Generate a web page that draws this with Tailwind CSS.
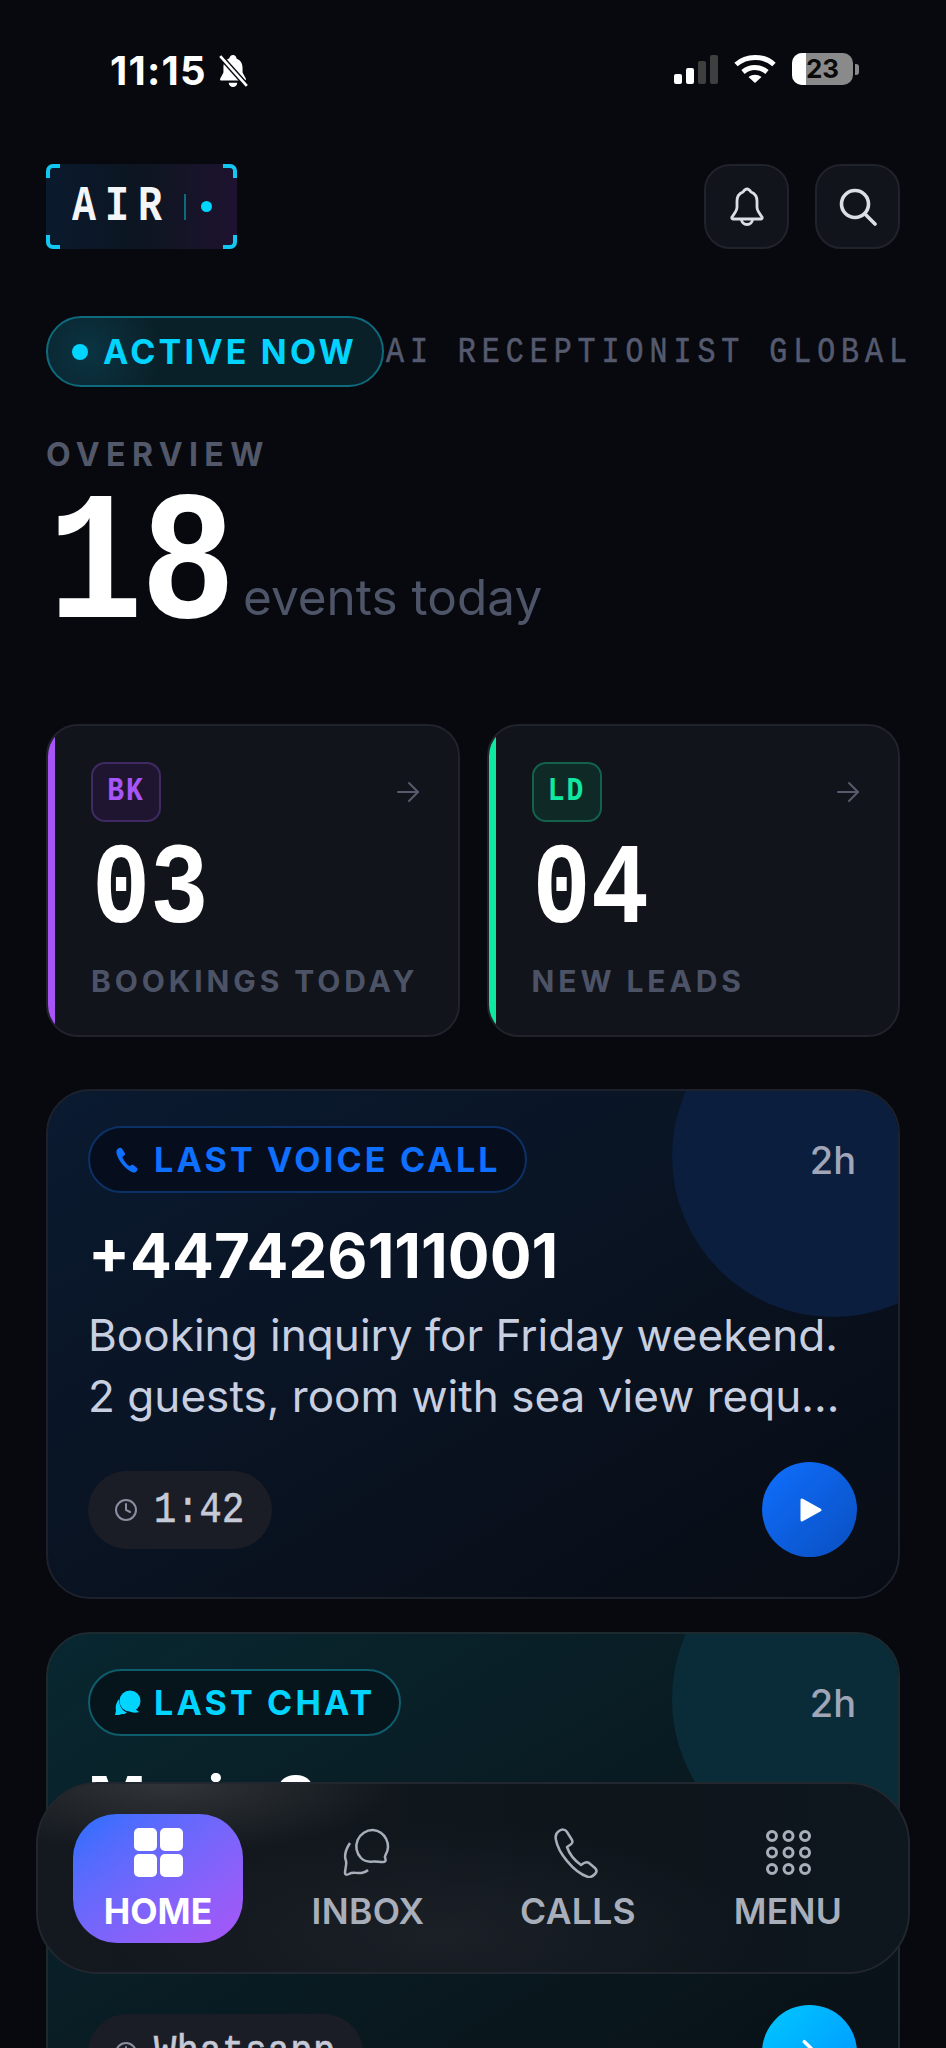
<!DOCTYPE html>
<html lang="en">
<head>
    <meta charset="UTF-8">
    <meta name="viewport" content="width=device-width, initial-scale=1.0">
    <title>AIR Overview</title>
    <script src="https://cdn.jsdelivr.net/npm/@tailwindcss/browser@4"></script>
</head>
<body class="bg-[#07090e]">
    <div class="relative h-[2048px] overflow-hidden bg-[#07090e] font-['Inter',sans-serif] text-white">
        <div class="px-[46px]">

            <!-- status bar -->
            <div class="flex h-[164px] items-start justify-between pt-[49px] pl-[64px] pr-[41px]">
                <div class="flex items-center gap-[9px]">
                    <span class="text-[40px] leading-[44px] font-bold tracking-[1.200px]">11:15</span>
                    <svg class="h-[34px] w-[34px]" viewBox="0 0 32 32" fill="white">
                        <path d="M16 1c2 0 3 1.500 3.500 3.500 4 1.500 5.500 5 5.500 9v4l3 5.500c.5 1 0 2-1 2H5c-1 0-1.500-1-1-2l3-5.500v-5c0-4 2-7 5.500-8.500C13 2.500 14 1 16 1z"/>
                        <path d="M12 27h8a4 4 0 0 1-8 0z"/>
                        <path d="M4 2 29 30" stroke="#07090e" stroke-width="5"/>
                        <path d="M4 2 29 30" stroke="white" stroke-width="2.500"/>
                    </svg>
                </div>
                <div class="flex items-center pt-[4px]">
                    <div class="flex h-[30px] items-end gap-[4px]">
                        <span class="h-[10px] w-[8px] rounded-[2px] bg-white"></span>
                        <span class="h-[16px] w-[8px] rounded-[2px] bg-white"></span>
                        <span class="h-[23px] w-[8px] rounded-[2px] bg-[#3f3f3f]"></span>
                        <span class="h-[29px] w-[8px] rounded-[2px] bg-[#3f3f3f]"></span>
                    </div>
                    <svg class="ml-[16px] h-[30px] w-[42px]" viewBox="0 0 42 30" fill="none" stroke="white" stroke-width="5">
                        <path d="M2 10.500C12.500 1 29.500 1 40 10.500"/>
                        <path d="M9 18c7-6 17-6 24 0"/>
                        <path d="M21 29 14.500 23c4-3 9-3 13 0z" fill="white" stroke="none"/>
                    </svg>
                    <div class="relative ml-[16px] flex h-[32px] w-[61px] overflow-hidden rounded-[10px] bg-[#8a8a8a]">
                        <span class="w-[14px] bg-white"></span>
                        <span class="absolute inset-0 text-center text-[26px] leading-[32px] font-bold text-[#0a0a0a]">23</span>
                    </div>
                    <span class="ml-[2px] h-[11px] w-[4px] rounded-r-[3px] bg-[#8a8a8a]"></span>
                </div>
            </div>

            <!-- header -->
            <div class="flex h-[85px] items-center justify-between">
                <div class="relative flex h-[85px] w-[191px] items-center rounded-[6px] bg-gradient-to-r from-[#0a1a2e] via-[#0c1520] to-[#1e1230]">
                    <span class="absolute top-0 left-0 h-[14px] w-[14px] rounded-tl-[7px] border-t-[4px] border-l-[4px] border-[#12c8f0]"></span>
                    <span class="absolute top-0 right-0 h-[14px] w-[14px] rounded-tr-[7px] border-t-[4px] border-r-[4px] border-[#12c8f0]"></span>
                    <span class="absolute bottom-0 left-0 h-[14px] w-[14px] rounded-bl-[7px] border-b-[4px] border-l-[4px] border-[#12c8f0]"></span>
                    <span class="absolute right-0 bottom-0 h-[14px] w-[14px] rounded-br-[7px] border-r-[4px] border-b-[4px] border-[#12c8f0]"></span>
                    <span class="ml-[26px] w-[112px] scale-y-[1.25] font-['Liberation_Mono',monospace] text-[40px] leading-[40px] font-bold tracking-[9px] text-[#f4f5f7]">AIR</span>
                    <span class="h-[26px] w-[2px] bg-[#0e6b7d]"></span>
                    <span class="ml-[15px] h-[11px] w-[11px] rounded-full bg-[#00d4ff]"></span>
                </div>
                <div class="flex gap-[26px]">
                    <div class="flex h-[85px] w-[85px] items-center justify-center rounded-[26px] border-2 border-[#20222c] bg-[#12141b]">
                        <svg class="h-[40px] w-[34px]" viewBox="0 0 34 40" fill="none" stroke="#dcdee6" stroke-width="2.800" stroke-linejoin="round">
                            <path d="M17 2c2 0 3 1.500 4 3 4 1.500 6 5 6 9v6c0 4 3 7 5 10 .5 1 0 2-1.500 2h-27c-1.500 0-2-1-1.500-2 2-3 5-6 5-10v-6c0-4 2-7.500 6-9 1-1.500 2-3 4-3z"/>
                            <path d="M11.500 32a5.500 5.500 0 0 0 11 0"/>
                        </svg>
                    </div>
                    <div class="flex h-[85px] w-[85px] items-center justify-center rounded-[26px] border-2 border-[#20222c] bg-[#12141b]">
                        <svg class="h-[38px] w-[38px]" viewBox="0 0 38 38" fill="none" stroke="#dcdee6" stroke-width="3.600" stroke-linecap="round">
                            <circle cx="16" cy="16" r="13.500"/>
                            <path d="M26 26 36 36"/>
                        </svg>
                    </div>
                </div>
            </div>

            <!-- active + ticker -->
            <div class="mt-[67px] flex h-[71px] items-center">
                <div class="flex h-[71px] w-[338px] shrink-0 items-center rounded-full border-2 border-[#0e6b7d] bg-[radial-gradient(circle_at_12%_50%,#0a3442,#0a2029_24%)]">
                    <span class="ml-[24px] h-[16px] w-[16px] rounded-full bg-[#00d4ff]"></span>
                    <span class="ml-[15px] text-[34px] leading-[40px] font-bold tracking-[3.200px] whitespace-nowrap text-[#00d4ff]">ACTIVE NOW</span>
                </div>
                <span class="ml-[2px] origin-center scale-y-[1.25] font-['Liberation_Mono',monospace] text-[30px] leading-[36px] tracking-[5.950px] whitespace-nowrap text-[#555a6e] [-webkit-text-stroke:0.5px_#555a6e]">AI RECEPTIONIST GLOBAL</span>
            </div>

            <!-- overview -->
            <div class="mt-[52px] h-[32px] text-[32px] leading-[32px] font-bold tracking-[6.400px] text-[#525869]">OVERVIEW</div>
            <div class="flex h-[155px] items-end">
                <span class="ml-[2px] w-[195px] origin-bottom scale-y-[1.168] font-['Liberation_Mono',monospace] text-[158px] leading-[100px] font-bold tracking-[-2px]">18</span>
                <span class="text-[49.500px] leading-[58px] text-[#4f5568]">events today</span>
            </div>

            <!-- stat cards -->
            <div class="mt-[98px] grid grid-cols-2 gap-[27px]">
                <div class="flex h-[313px] overflow-hidden rounded-[32px] border-2 border-[#20222c] bg-[#12141b]">
                    <div class="w-[7px] bg-[#a855f7]"></div>
                    <div class="flex-1 pt-[36px] pr-[38px] pl-[36px]">
                        <div class="flex items-center justify-between">
                            <div class="flex h-[60px] w-[70px] items-center justify-center rounded-[14px] border-2 border-[#3f2a63] bg-[#1f1530] font-['Liberation_Mono',monospace] text-[28px] font-bold tracking-[2px] text-[#a855f7]"><span class="scale-y-[1.2]">BK</span></div>
                            <svg class="h-[24px] w-[24px]" viewBox="0 0 24 24" fill="none" stroke="#565b6d" stroke-width="2" stroke-linecap="round" stroke-linejoin="round"><path d="M2 12h20"/><path d="m13 3 9 9-9 9"/></svg>
                        </div>
                        <div class="mt-[24px] ml-[1px] h-[90px] scale-y-[1.18] font-['Liberation_Mono',monospace] text-[97px] leading-[90px] font-bold">03</div>
                        <div class="mt-[29px] text-[30px] leading-[32px] font-bold tracking-[3.900px] whitespace-nowrap text-[#4d5366]">BOOKINGS TODAY</div>
                    </div>
                </div>
                <div class="flex h-[313px] overflow-hidden rounded-[32px] border-2 border-[#20222c] bg-[#12141b]">
                    <div class="w-[7px] bg-[#10e8a0]"></div>
                    <div class="flex-1 pt-[36px] pr-[38px] pl-[36px]">
                        <div class="flex items-center justify-between">
                            <div class="flex h-[60px] w-[70px] items-center justify-center rounded-[14px] border-2 border-[#14614e] bg-[#0f2a26] font-['Liberation_Mono',monospace] text-[28px] font-bold tracking-[2px] text-[#10e8a0]"><span class="scale-y-[1.2]">LD</span></div>
                            <svg class="h-[24px] w-[24px]" viewBox="0 0 24 24" fill="none" stroke="#565b6d" stroke-width="2" stroke-linecap="round" stroke-linejoin="round"><path d="M2 12h20"/><path d="m13 3 9 9-9 9"/></svg>
                        </div>
                        <div class="mt-[24px] ml-[1px] h-[90px] scale-y-[1.18] font-['Liberation_Mono',monospace] text-[97px] leading-[90px] font-bold">04</div>
                        <div class="mt-[29px] text-[30px] leading-[32px] font-bold tracking-[3.900px] whitespace-nowrap text-[#4d5366]">NEW LEADS</div>
                    </div>
                </div>
            </div>

            <!-- last voice call -->
            <div class="relative mt-[52px] overflow-hidden rounded-[44px] border-2 border-[#1d212c] bg-gradient-to-br from-[#0a1a30] to-[#080c14] pt-[35px] pr-[41px] pb-[40px] pl-[40px]">
                <div class="absolute -top-[96px] -right-[96px] h-[322px] w-[322px] rounded-full bg-[#0b1e3e]"></div>
                <div class="relative flex items-center justify-between">
                    <div class="flex h-[67px] items-center rounded-full border-2 border-[#0c3166] bg-[#060e1e] pr-[24px] pl-[25px]">
                        <svg class="h-[26px] w-[26px]" viewBox="0 0 50 50" fill="#0f6fff"><path d="M6 3c3-2 6-2 8 1l5 8c1 2 0 4-2 5l-3 2c2 6 7 13 14 18l3-2c2-1 4-1 5 0l6 5c2 2 2 4 0 6-2 2-4 4-7 3C20 44 5 24 3 12c-1-4 0-7 3-9z"/></svg>
                        <span class="ml-[13px] text-[34px] leading-[40px] font-bold tracking-[3.200px] whitespace-nowrap text-[#0f6fff]">LAST VOICE CALL</span>
                    </div>
                    <span class="mr-[1px] text-[38px] leading-[44px] font-medium text-[#a0a6b8]">2h</span>
                </div>
                <div class="relative mt-[28px] text-[62px] leading-[70px] font-bold tracking-[0px]">+447426111001</div>
                <div class="relative mt-[14px] text-[44.100px] leading-[61px] whitespace-nowrap text-[#c8cfe0]">Booking inquiry for Friday weekend.<br>2 guests, room with sea view requ...</div>
                <div class="relative mt-[35px] flex h-[95px] items-center justify-between">
                    <div class="flex h-[78px] items-center rounded-full bg-[#1b1d26] pr-[27px] pl-[26px]">
                        <svg class="h-[24px] w-[24px]" viewBox="0 0 24 24" fill="none" stroke="#8a8fa0" stroke-width="2" stroke-linecap="round"><circle cx="12" cy="12" r="10"/><path d="M12 6v6l4 2"/></svg>
                        <span class="ml-[16px] scale-y-[1.2] font-['Liberation_Mono',monospace] text-[37px] leading-[44px] tracking-[0.500px] whitespace-nowrap text-[#c5cad6] [-webkit-text-stroke:0.6px_#c5cad6]">1:42</span>
                    </div>
                    <div class="flex h-[95px] w-[95px] items-center justify-center rounded-full bg-gradient-to-br from-[#0f6fff] to-[#0a4fc0]">
                        <svg class="ml-[3px] h-[26px] w-[24px]" viewBox="0 0 24 26" fill="white" stroke="white" stroke-width="3" stroke-linejoin="round"><path d="M3 3v20l18-10z"/></svg>
                    </div>
                </div>
            </div>

            <!-- last chat: its preview lines sit fully behind the nav, so only their height is kept -->
            <div class="relative mt-[33px] overflow-hidden rounded-[44px] border-2 border-[#1d2a30] bg-gradient-to-br from-[#082730] to-[#080f14] pt-[35px] pr-[41px] pb-[40px] pl-[40px]">
                <div class="absolute -top-[96px] -right-[96px] h-[322px] w-[322px] rounded-full bg-[#0a2c38]"></div>
                <div class="relative flex items-center justify-between">
                    <div class="flex h-[67px] items-center rounded-full border-2 border-[#0e5c6c] bg-[#06141b] pr-[23px] pl-[25px]">
                        <svg class="h-[26px] w-[26px]" viewBox="0 0 26 26" fill="#00d4ff"><circle cx="15" cy="11" r="10.500"/><path d="M19 18l5 4c-3 1-7 1-10-1z"/><path d="M4 9c-3 4-4 8-3 12l-1 4c3 0 5 0 7-1 2 .5 4-.5 5-1.500C7 21 4 15 4 9z"/></svg>
                        <span class="ml-[13px] text-[34px] leading-[40px] font-bold tracking-[3.200px] whitespace-nowrap text-[#00d4ff]">LAST CHAT</span>
                    </div>
                    <span class="mr-[1px] text-[38px] leading-[44px] font-medium text-[#a0a6b8]">2h</span>
                </div>
                <div class="relative mt-[28px] text-[62px] leading-[70px] font-bold">Maria S</div>
                <div class="relative mt-[14px] h-[122px]"></div>
                <div class="relative mt-[35px] flex h-[95px] items-center justify-between">
                    <div class="flex h-[78px] items-center rounded-full bg-[#1b1d26] pr-[27px] pl-[26px]">
                        <svg class="h-[24px] w-[24px]" viewBox="0 0 24 24" fill="none" stroke="#8a8fa0" stroke-width="2" stroke-linecap="round"><circle cx="12" cy="12" r="10"/><path d="M12 6v6l4 2"/></svg>
                        <span class="ml-[16px] scale-y-[1.2] font-['Liberation_Mono',monospace] text-[37px] leading-[44px] tracking-[0.500px] whitespace-nowrap text-[#c5cad6] [-webkit-text-stroke:0.6px_#c5cad6]">Whatsapp</span>
                    </div>
                    <div class="flex h-[95px] w-[95px] items-center justify-center rounded-full bg-gradient-to-br from-[#00c8ff] to-[#0090ff]">
                        <svg class="h-[34px] w-[34px]" viewBox="0 0 24 24" fill="none" stroke="white" stroke-width="2.500" stroke-linecap="round" stroke-linejoin="round"><path d="m8 4 8 8-8 8"/></svg>
                    </div>
                </div>
            </div>
        </div>

        <!-- bottom nav: opaque, the glows stand in for the blurred text behind it -->
        <nav class="absolute top-[1782px] left-[36px] grid h-[192px] w-[874px] grid-cols-4 items-center rounded-[62px] border-2 border-[#22262e] bg-[radial-gradient(ellipse_230px_70px_at_130px_0px,#313438,transparent),radial-gradient(ellipse_320px_110px_at_400px_150px,#1b2027,transparent),linear-gradient(90deg,#14191f,#0e151b_60%,#0d171d)] px-[15px]">
            <div class="mx-auto flex h-[129px] w-[170px] flex-col items-center rounded-[44px] bg-gradient-to-br from-[#1f6fff] to-[#a855f7] pt-[14px]">
                <div class="grid h-[49px] w-[49px] grid-cols-2 gap-[3px]">
                    <span class="rounded-[5px] bg-white"></span><span class="rounded-[5px] bg-white"></span>
                    <span class="rounded-[5px] bg-white"></span><span class="rounded-[5px] bg-white"></span>
                </div>
                <span class="mt-[15px] text-[35.500px] leading-[40px] font-bold">HOME</span>
            </div>
            <div class="flex h-[129px] flex-col items-center pt-[14px]">
                <svg class="h-[49px] w-[50px]" viewBox="0 0 50 49" fill="none" stroke="#a9aebb" stroke-width="2.500" stroke-linejoin="round">
                    <path d="M30 2a16.500 16.500 0 0 0-12 28c3 3 8 4 12 3.500 3-.5 6 .5 10 .5 2 0 3-1 2.500-3-.5-1-1-2.500 0-4A16.500 16.500 0 0 0 30 2z"/>
                    <path d="M7 15c-4 6-6 13-4 18 1 3-1 8-1 12 0 2 2 2 4 1 3-2 6-1 9-1 3 .5 8-1 10-3"/>
                </svg>
                <span class="mt-[15px] text-[35.500px] leading-[40px] font-semibold tracking-[0.300px] text-[#a9aebb]">INBOX</span>
            </div>
            <div class="flex h-[129px] flex-col items-center pt-[14px]">
                <svg class="h-[50px] w-[50px]" viewBox="0 0 50 50" fill="none" stroke="#a9aebb" stroke-width="2.500" stroke-linejoin="round"><path d="M6 3c3-2 6-2 8 1l5 8c1 2 0 4-2 5l-3 2c2 6 7 13 14 18l3-2c2-1 4-1 5 0l6 5c2 2 2 4 0 6-2 2-4 4-7 3C20 44 5 24 3 12c-1-4 0-7 3-9z"/></svg>
                <span class="mt-[14px] text-[35.500px] leading-[40px] font-semibold tracking-[0.300px] text-[#a9aebb]">CALLS</span>
            </div>
            <div class="flex h-[129px] flex-col items-center pt-[14px]">
                <svg class="h-[49px] w-[49px]" viewBox="0 0 49 49" fill="none" stroke="#a9aebb" stroke-width="3">
                    <circle cx="8" cy="8" r="4.500"/><circle cx="24.500" cy="8" r="4.500"/><circle cx="41" cy="8" r="4.500"/>
                    <circle cx="8" cy="24.500" r="4.500"/><circle cx="24.500" cy="24.500" r="4.500"/><circle cx="41" cy="24.500" r="4.500"/>
                    <circle cx="8" cy="41" r="4.500"/><circle cx="24.500" cy="41" r="4.500"/><circle cx="41" cy="41" r="4.500"/>
                </svg>
                <span class="mt-[15px] text-[35.500px] leading-[40px] font-semibold tracking-[0.300px] text-[#a9aebb]">MENU</span>
            </div>
        </nav>
    </div>
</body>
</html>
